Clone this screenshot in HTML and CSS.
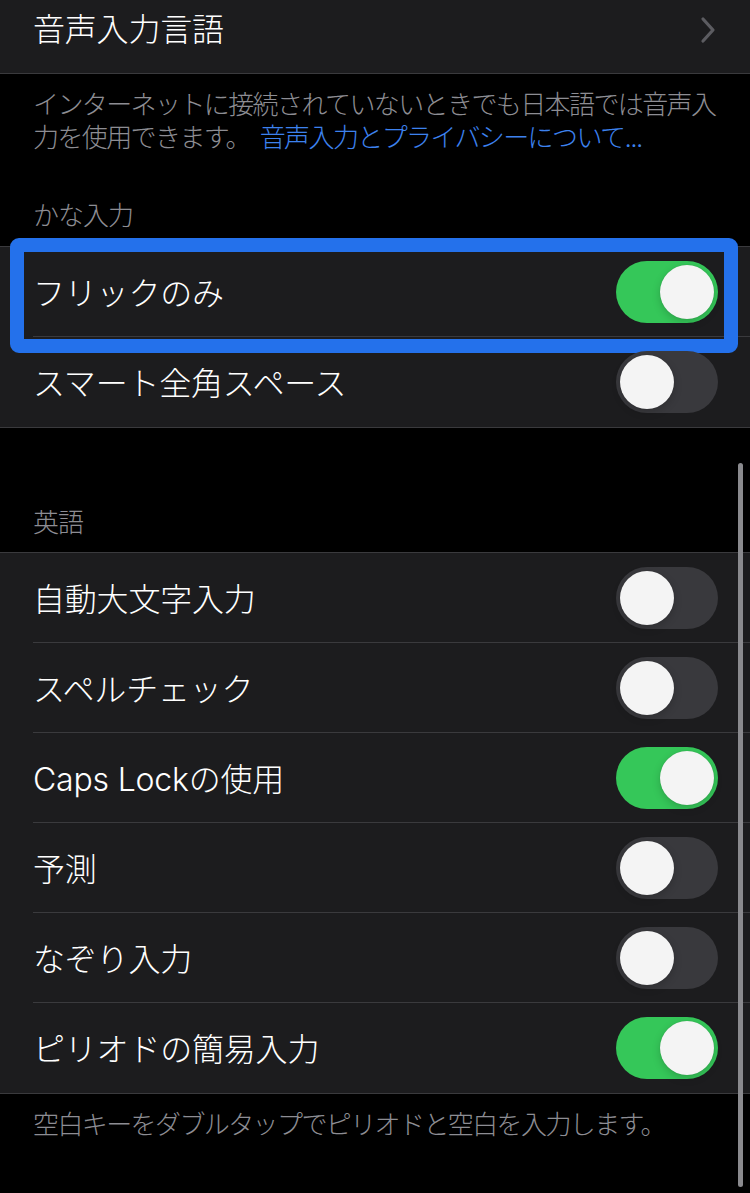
FILE: index.html
```html
<!DOCTYPE html>
<html lang="ja">
<head>
<meta charset="utf-8">
<link rel="stylesheet" href="styles.css">
</head>
<body>
<div class="screen">
  <section class="group group-first">
    <div class="row">
      <div class="row-inner">
        <span class="label">音声入力言語</span>
        <svg class="chevron" width="18" height="28" viewBox="0 0 18 28"><polyline points="4,3 14,14 4,25" fill="none" stroke="#5c5c61" stroke-width="3.2" stroke-linecap="round" stroke-linejoin="round"/></svg>
      </div>
    </div>
  </section>
  <p class="footer">インターネットに接続されていないときでも日本語では音声入<br>力を使用できます。 <span class="link">音声入力とプライバシーについて...</span></p>

  <h2 class="header header-kana">かな入力</h2>
  <section class="group">
    <div class="row highlighted">
      <div class="row-inner">
        <span class="label">フリックのみ</span>
        <span class="switch on"><span class="knob"></span></span>
      </div>
      <div class="focus-ring"></div>
    </div>
    <div class="row">
      <div class="row-inner">
        <span class="label">スマート全角スペース</span>
        <span class="switch"><span class="knob"></span></span>
      </div>
    </div>
  </section>

  <h2 class="header header-en">英語</h2>
  <section class="group">
    <div class="row"><div class="row-inner"><span class="label">自動大文字入力</span><span class="switch"><span class="knob"></span></span></div></div>
    <div class="row"><div class="row-inner"><span class="label">スペルチェック</span><span class="switch"><span class="knob"></span></span></div></div>
    <div class="row"><div class="row-inner"><span class="label">Caps Lockの使用</span><span class="switch on"><span class="knob"></span></span></div></div>
    <div class="row"><div class="row-inner"><span class="label">予測</span><span class="switch"><span class="knob"></span></span></div></div>
    <div class="row"><div class="row-inner"><span class="label">なぞり入力</span><span class="switch"><span class="knob"></span></span></div></div>
    <div class="row"><div class="row-inner"><span class="label">ピリオドの簡易入力</span><span class="switch on"><span class="knob"></span></span></div></div>
  </section>
  <p class="footer footer-last">空白キーをダブルタップでピリオドと空白を入力します。</p>

  <div class="scrollbar"></div>
</div>
</body>
</html>
```

FILE: styles.css
```css
html, body {
  margin: 0;
  padding: 0;
  background: #000;
}
body {
  font-family: Inter, "Noto Sans CJK JP", sans-serif;
  color: #fff;
}
.screen {
  position: relative;
  width: 750px;
  height: 1193px;
  overflow: hidden;
  background: #000;
}
.group {
  background: #1c1c1e;
  border-top: 1px solid #3a3a3d;
  border-bottom: 1px solid #3a3a3d;
}
.group-first {
  margin-top: -17px;
  border-top: none;
}
.row {
  position: relative;
  padding-left: 33px;
}
.row-inner {
  box-sizing: border-box;
  height: 90px;
  display: flex;
  align-items: center;
  justify-content: space-between;
  padding-right: 32px;
  border-bottom: 1px solid #3a3a3d;
}
.row:last-child .row-inner {
  border-bottom: none;
}
.label {
  font-size: 32px;
  font-weight: 300;
  letter-spacing: -0.2px;
  line-height: 40px;
  margin-top: 4px;
  color: #fff;
}
.chevron {
  margin-right: 1px;
  margin-top: 4px;
}
.footer {
  margin: 0;
  padding: 14px 10px 0 33px;
  font-size: 26px;
  font-weight: 300;
  line-height: 33px;
  letter-spacing: -1.6px;
  color: #8d8d93;
  white-space: nowrap;
}
.link {
  color: #3d82ee;
  margin-left: 4px;
}
.header {
  margin: 0;
  padding: 0 33px 14px;
  font-size: 26px;
  font-weight: 300;
  line-height: 33px;
  letter-spacing: -1px;
  color: #8d8d93;
}
.header-kana {
  margin-top: 45px;
}
.header-en {
  margin-top: 78px;
  padding-bottom: 13px;
}
.switch {
  box-sizing: border-box;
  width: 102px;
  height: 62px;
  border-radius: 31px;
  background: #39393d;
  padding: 4px;
  display: flex;
  align-items: center;
  justify-content: flex-start;
  flex-shrink: 0;
}
.switch.on {
  background: #35c759;
  justify-content: flex-end;
}
.knob {
  width: 54px;
  height: 54px;
  border-radius: 50%;
  background: #f4f4f4;
  box-shadow: 0 3px 8px rgba(0,0,0,0.18), 0 0 1px rgba(0,0,0,0.2);
}
.focus-ring {
  position: absolute;
  left: 10px;
  right: 12px;
  top: -9px;
  height: 115px;
  box-sizing: border-box;
  border: 14px solid #2471eb;
  border-radius: 9px;
  pointer-events: none;
}
.scrollbar {
  position: absolute;
  left: 738px;
  top: 463px;
  width: 5px;
  height: 724px;
  border-radius: 3px;
  background: #8a8a8e;
}
```
